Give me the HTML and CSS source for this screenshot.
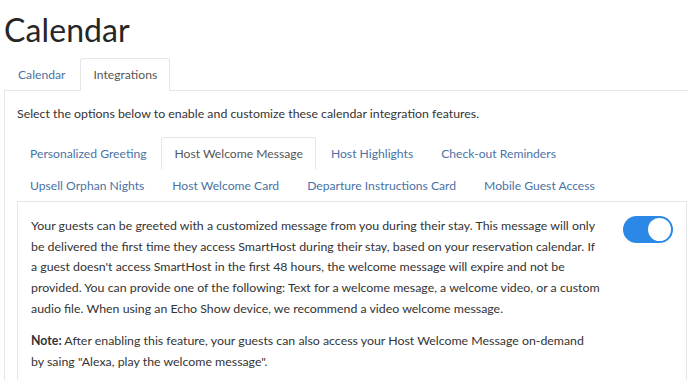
FILE: index.html
```html
<!DOCTYPE html>
<html>
<head>
<meta charset="utf-8">
<link rel="stylesheet" href="styles.css">
</head>
<body>
<div class="page">
  <h1 class="title">Calendar</h1>
  <ul class="tabs">
    <li class="tab"><a>Calendar</a></li>
    <li class="tab active"><a>Integrations</a></li>
  </ul>
  <div class="panel">
    <p class="intro">Select the options below to enable and customize these calendar integration features.</p>
    <ul class="tabs inner-tabs">
      <li class="tab"><a>Personalized Greeting</a></li>
      <li class="tab active"><a>Host Welcome Message</a></li>
      <li class="tab"><a>Host Highlights</a></li>
      <li class="tab"><a>Check-out Reminders</a></li>
      <li class="tab"><a>Upsell Orphan Nights</a></li>
      <li class="tab"><a>Host Welcome Card</a></li>
      <li class="tab"><a>Departure Instructions Card</a></li>
      <li class="tab"><a>Mobile Guest Access</a></li>
    </ul>
    <div class="content">
      <div class="text">
        <p>Your guests can be greeted with a customized message from you during their stay. This message will only<br>be delivered the first time they access SmartHost during their stay, based on your reservation calendar. If<br>a guest doesn't access SmartHost in the first 48 hours, the welcome message will expire and not be<br>provided. You can provide one of the following: Text for a welcome mesage, a welcome video, or a custom<br>audio file. When using an Echo Show device, we recommend a video welcome message.</p>
        <p><strong>Note:</strong> After enabling this feature, your guests can also access your Host Welcome Message on-demand<br>by saing "Alexa, play the welcome message".</p>
      </div>
      <div class="toggle"><span class="knob"></span></div>
    </div>
  </div>
</div>
</body>
</html>
```
FILE: styles.css
```css
* { box-sizing: border-box; }
html, body { margin: 0; padding: 0; background: #fff; }
body {
  font-family: Lato, "Open Sans", sans-serif;
  font-size: 12.35px;
  color: #333;
  overflow: hidden;
}
.page { padding: 0 0 0 4px; }
.title {
  margin: 0;
  padding-top: 10px;
  height: 58px;
  font-size: 32px;
  font-weight: 400;
  line-height: 40px;
  color: #262626;
  letter-spacing: 0.1px;
}
.tabs {
  list-style: none;
  margin: 0;
  padding: 0 0 0 1px;
  display: flex;
  flex-wrap: wrap;
  border-bottom: 1px solid #e6e6e6;
}
.tab { margin-right: 2px; margin-bottom: -1px; font-size: 12.15px; }
.tab a {
  display: block;
  padding: 7px 12px;
  line-height: 17px;
  border: 1px solid transparent;
  border-radius: 3px 3px 0 0;
  color: #4a72a4;
}
.tab.active a {
  color: #555;
  background: #fff;
  border-color: #e6e6e6 #e6e6e6 transparent;
}
.panel {
  border: 1px solid #e6e6e6;
  border-top: 0;
  border-right: 0;
  padding: 13px 0 0 12px;
}
.intro { margin: 0 0 13px 0; line-height: 20px; }
.inner-tabs { border-bottom: 0; padding-left: 0; }
.content {
  display: flex;
  border: 1px solid #e6e6e6;
  padding: 14px 13px 6px 13px;
  margin-right: 1px;
}
.text { flex: 1; min-width: 0; }
.text p { margin: 0 0 11.5px 0; line-height: 20.7px; white-space: nowrap; }
.text strong { font-weight: 700; }
.toggle {
  flex: none;
  width: 50px;
  height: 27px;
  border-radius: 14px;
  background: #2b88e6;
  position: relative;
}
.knob {
  position: absolute;
  right: 2px;
  top: 2px;
  width: 23px;
  height: 23px;
  border-radius: 50%;
  background: #fff;
}
```
